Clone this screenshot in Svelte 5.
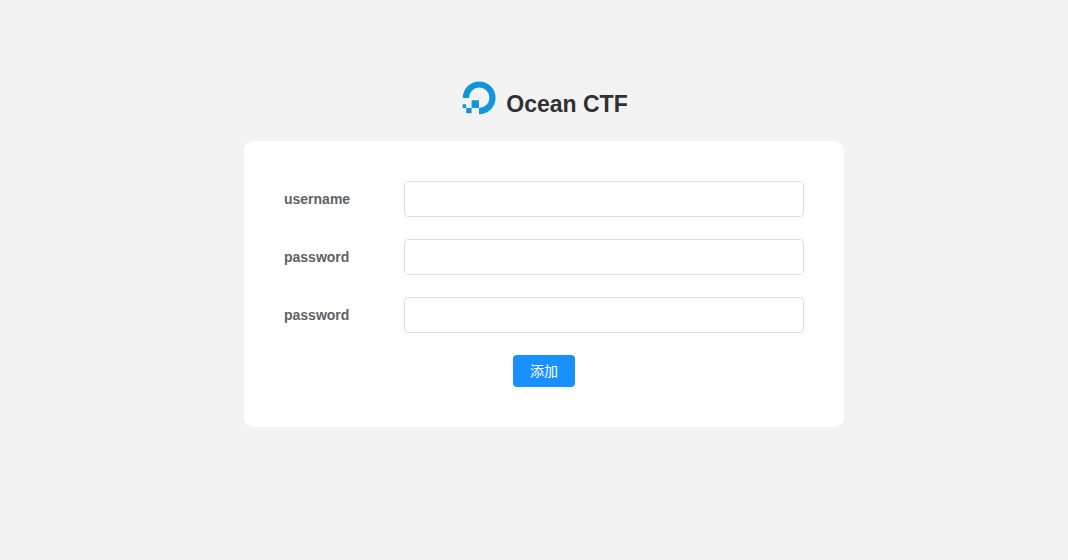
<script>
  const fields = $state([
    { id: 'username', label: 'username', type: 'text', value: '' },
    { id: 'password', label: 'password', type: 'password', value: '' },
    { id: 'password-confirm', label: 'password', type: 'password', value: '' }
  ]);

  function submit(event) {
    event.preventDefault();
  }
</script>

<main class="page">
  <header class="brand">
    <svg class="logo" viewBox="0 0 34 34" aria-hidden="true">
      <path d="M.8 17A16.4 16.4 0 1 1 17 33.2V27A10.2 10.2 0 1 0 7 17Z" />
      <path d="M9.6 19.2H17V27H9.6ZM4.2 27H9.6V32.2H4.2ZM.7 23.2H4.2V27H.7Z" />
    </svg>
    <h1>Ocean CTF</h1>
  </header>

  <form class="card" onsubmit={submit}>
    {#each fields as field (field.id)}
      <div class="row">
        <label for={field.id}>{field.label}</label>
        <input id={field.id} type={field.type} bind:value={field.value} autocomplete="off" />
      </div>
    {/each}
    <button type="submit">添加</button>
  </form>
</main>

<style>
  :global(body) {
    margin: 0;
    background: #f3f3f3;
  }

  .page {
    box-sizing: border-box;
    min-height: 100vh;
    padding: 81px 0 40px 20px;
    display: flex;
    flex-direction: column;
    align-items: center;
    background: #f3f3f3;
    font-family: "Liberation Sans", Arial, "Noto Sans CJK SC", sans-serif;
  }

  .brand {
    display: flex;
    align-items: flex-start;
    gap: 10px;
    padding-left: 2px;
    margin-bottom: 24px;
  }

  .logo {
    width: 34px;
    height: 34px;
    fill: #1296db;
  }

  h1 {
    margin: 0;
    padding-top: 10px;
    font-size: 23px;
    line-height: 26px;
    font-weight: 700;
    color: #303133;
  }

  .card {
    box-sizing: border-box;
    width: 100%;
    max-width: 600px;
    padding: 40px;
    display: flex;
    flex-direction: column;
    gap: 22px;
    background: #fff;
    border-radius: 10px;
  }

  .row {
    display: flex;
    align-items: center;
  }

  label {
    flex: 0 0 120px;
    font-size: 14px;
    line-height: 36px;
    font-weight: 700;
    color: #606266;
  }

  input {
    box-sizing: border-box;
    flex: 1;
    min-width: 0;
    height: 36px;
    padding: 0 15px;
    border: 1px solid #dcdfe6;
    border-radius: 4px;
    background: #fff;
    font: inherit;
    font-size: 14px;
    color: #606266;
    outline: none;
  }

  input:focus {
    border-color: #1890ff;
  }

  button {
    align-self: center;
    padding: 8px 17px;
    border: 0;
    border-radius: 4px;
    background: #1890ff;
    color: #fff;
    font: inherit;
    font-size: 14px;
    line-height: 16px;
    font-weight: 400;
    cursor: pointer;
  }
</style>
